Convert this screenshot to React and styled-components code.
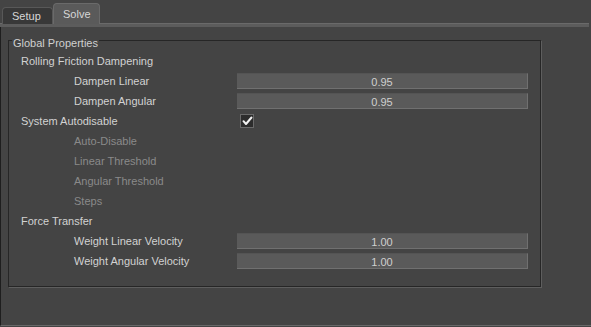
import React from 'react';
import styled, { createGlobalStyle } from 'styled-components';

const Global = createGlobalStyle`
  html, body {
    margin: 0;
    background: #444444;
  }
  * {
    box-sizing: border-box;
  }
`;

const Window = styled.div`
  width: 591px;
  height: 327px;
  background: #444444;
  font-family: "Liberation Sans", Arial, sans-serif;
  font-size: 11px;
  color: #d2d2d2;
  display: flex;
  flex-direction: column;
  overflow: hidden;
`;

const TabBar = styled.div`
  height: 27px;
  margin-right: 2px;
  padding-left: 2px;
  display: flex;
  align-items: flex-end;
  border-bottom: 3px solid #5c5c5c;
  box-shadow: inset 0 -3px 0 -2px #6a6a6a;
`;

const Tab = styled.div`
  width: ${p => (p.$active ? 47 : 51)}px;
  height: ${p => (p.$active ? 21 : 17)}px;
  padding-left: ${p => (p.$active ? 9 : 9)}px;
  display: flex;
  align-items: center;
  background: ${p => (p.$active ? '#5a5a5a' : '#383838')};
  border: 1px solid ${p => (p.$active ? '#6a6a6a' : '#585858')};
  border-bottom: none;
  border-radius: 4px 4px 0 0;
  color: #d6d6d6;
  line-height: 1;
`;

const Panel = styled.div`
  height: 299px;
  border-left: 1px solid #1e1e1e;
  border-bottom: 1px solid #686868;
  padding-top: 7px;
  padding-left: 7px;
`;

const GroupBox = styled.fieldset`
  width: 533px;
  margin: 0;
  padding: 5px 0 15px 0;
  border: 1px solid #262626;
  box-shadow: 1px 1px 0 #5e5e5e;
  min-inline-size: 0;
`;

const GroupTitle = styled.legend`
  margin-left: 3px;
  padding: 0 1px;
  line-height: 12px;
  position: relative;
  top: 3px;
  color: #d0d0d0;
`;

const Row = styled.div`
  height: 20px;
  display: flex;
  align-items: center;
`;

const Label = styled.div`
  width: 228px;
  padding-left: ${p => (p.$sub ? 65 : 12)}px;
  color: ${p => (p.$disabled ? '#8a8a8a' : '#d2d2d2')};
  white-space: nowrap;
`;

const Field = styled.div`
  width: 291px;
  height: 16px;
  display: flex;
  align-items: center;
  justify-content: center;
  background: #5a5a5a;
  border-top: 1px solid #545454;
  border-right: 1px solid #707070;
  border-bottom: 1px solid #707070;
  color: #cfcfcf;
  padding-top: 1px;
`;

const Check = styled.div`
  width: 14px;
  height: 14px;
  margin-left: 3px;
  background: #2c2c2c;
  border: 1px solid #6a6a6a;
  display: flex;
  align-items: center;
  justify-content: center;
`;

const CheckMark = () => (
  <svg width="11" height="10" viewBox="0 0 11 10">
    <path d="M1.5 5.2 L4 8 L9.5 1.5" fill="none" stroke="#f2f2f2" strokeWidth="2" strokeLinecap="round" strokeLinejoin="round" />
  </svg>
);

const rows = [
  { label: 'Rolling Friction Dampening' },
  { label: 'Dampen Linear', sub: true, value: '0.95' },
  { label: 'Dampen Angular', sub: true, value: '0.95' },
  { label: 'System Autodisable', check: true },
  { label: 'Auto-Disable', sub: true, disabled: true },
  { label: 'Linear Threshold', sub: true, disabled: true },
  { label: 'Angular Threshold', sub: true, disabled: true },
  { label: 'Steps', sub: true, disabled: true },
  { label: 'Force Transfer' },
  { label: 'Weight Linear Velocity', sub: true, value: '1.00' },
  { label: 'Weight Angular Velocity', sub: true, value: '1.00' },
];

export default function App() {
  return (
    <>
      <Global />
      <Window>
        <TabBar>
          <Tab>Setup</Tab>
          <Tab $active>Solve</Tab>
        </TabBar>
        <Panel>
          <GroupBox>
            <GroupTitle>Global Properties</GroupTitle>
            {rows.map(r => (
              <Row key={r.label}>
                <Label $sub={r.sub} $disabled={r.disabled}>{r.label}</Label>
                {r.value && <Field>{r.value}</Field>}
                {r.check && (
                  <Check>
                    <CheckMark />
                  </Check>
                )}
              </Row>
            ))}
          </GroupBox>
        </Panel>
      </Window>
    </>
  );
}
